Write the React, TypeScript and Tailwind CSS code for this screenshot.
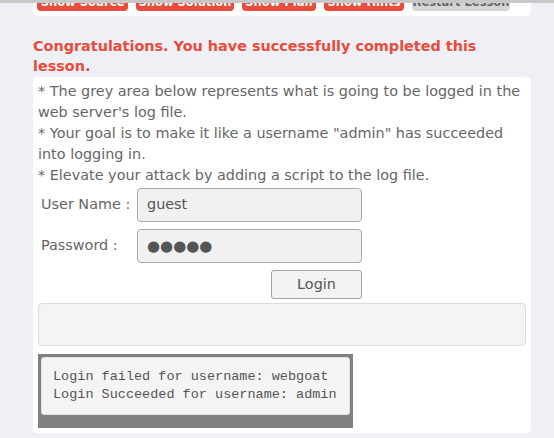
export default function App() {
  return (
    <div className="min-h-[438px] w-full overflow-hidden border-t-[3px] border-[#c8c8c8] bg-[#eff0f5] font-['DejaVu_Sans',sans-serif]">
      <div className="ml-[33px] w-[498px]">
        {/* button bar, scrolled mostly out of view */}
        <div className="-mt-[24px] flex gap-[8px] rounded-b-[4px] bg-white pb-[5px] pl-[4px] pt-[4px] text-[11.5px] font-bold leading-none">
          <button className="flex h-[28px] w-[91px] items-end justify-center overflow-hidden whitespace-nowrap rounded-[4px] bg-[#e74c3c] pb-[3px] text-white">Show Source</button>
          <button className="flex h-[28px] w-[98px] items-end justify-center overflow-hidden whitespace-nowrap rounded-[4px] bg-[#e74c3c] pb-[3px] text-white">Show Solution</button>
          <button className="flex h-[28px] w-[74px] items-end justify-center overflow-hidden whitespace-nowrap rounded-[4px] bg-[#e74c3c] pb-[3px] text-white">Show Plan</button>
          <button className="flex h-[28px] w-[80px] items-end justify-center overflow-hidden whitespace-nowrap rounded-[4px] bg-[#e74c3c] pb-[3px] text-white">Show Hints</button>
          <button className="flex h-[28px] w-[98px] items-end justify-center overflow-hidden whitespace-nowrap rounded-[4px] bg-[#d5d5d5] pb-[3px] text-[#666]">Restart Lesson</button>
        </div>

        <h2 className="mt-[20px] text-[14.4px] font-bold leading-[20px] text-[#e74c3c]">
          Congratulations. You have successfully completed this lesson.
        </h2>

        <div className="mt-[1px] rounded-[4px] bg-white px-[5px] pb-[5px] pt-[4px]">
          <div className="text-[14.4px] leading-[21px] text-[#666]">
            <p>* The grey area below represents what is going to be logged in the web server's log file.</p>
            <p>* Your goal is to make it like a username "admin" has succeeded into logging in.</p>
            <p>* Elevate your attack by adding a script to the log file.</p>
          </div>

          <div className="mt-[2px] grid grid-cols-[99px_225px] gap-y-[7px] text-[14.4px] text-[#666]">
            <label className="flex items-center pl-[3px]">User Name :</label>
            <div className="flex h-[34px] items-center rounded-[4px] border border-[#aaa] bg-[#f1f1f1] px-[9px] text-[#555]">guest</div>
            <label className="flex items-center pl-[3px]">Password :</label>
            <div className="flex h-[34px] items-center rounded-[4px] border border-[#aaa] bg-[#f1f1f1] px-[9px] text-[15px] text-[#555]">●●●●●</div>
            <div />
            <div className="flex justify-end">
              <button className="h-[29px] w-[91px] rounded-[3px] border border-[#a3a3a3] bg-[#f3f3f3] text-[14.4px] text-[#555]">Login</button>
            </div>
          </div>

          <div className="mt-[4px] h-[43px] w-[488px] rounded-[4px] border border-[#dcdcdc] bg-[#f4f4f4]" />

          <div className="mt-[8px] w-[315px] bg-[#808080] px-[3px] pb-[13px] pt-[3px]">
            <div className="whitespace-nowrap rounded-[3px] border border-[#e0e0e0] bg-[#f4f4f4] px-[11px] py-[10px] font-['Liberation_Mono',monospace] text-[13.5px] leading-[18px] text-[#555]">
              <div>Login failed for username: webgoat</div>
              <div>Login Succeeded for username: admin</div>
            </div>
          </div>
        </div>
      </div>
    </div>
  );
}
